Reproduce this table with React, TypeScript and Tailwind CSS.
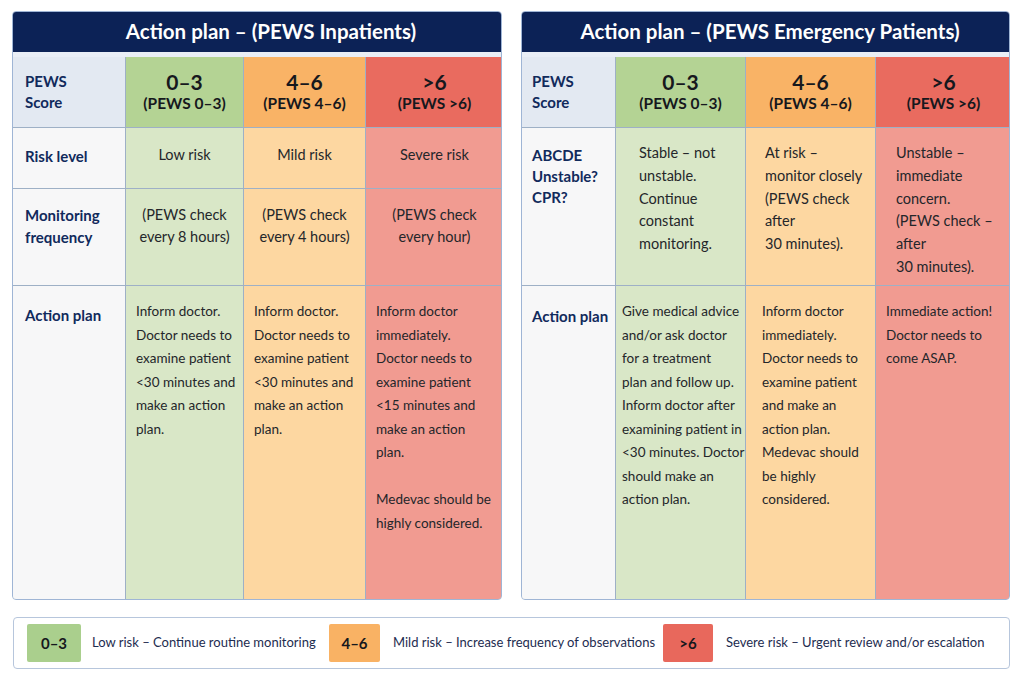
import React from 'react';

type Tone = 'g' | 'o' | 'r';

const headBg: Record<Tone, string> = {
  g: 'bg-[#b4d394]',
  o: 'bg-[#f9b366]',
  r: 'bg-[#e96b5f]',
};

const bodyBg: Record<Tone, string> = {
  g: 'bg-[#d9e7c7]',
  o: 'bg-[#fdd7a1]',
  r: 'bg-[#f19b91]',
};

const tones: Tone[] = ['g', 'o', 'r'];

const scores = [
  { big: '0–3', small: '(PEWS 0–3)' },
  { big: '4–6', small: '(PEWS 4–6)' },
  { big: '>6', small: '(PEWS >6)' },
];

function Lines({ lines }: { lines: string[] }) {
  return (
    <>
      {lines.map((l, i) => (
        <div key={i} className="whitespace-nowrap">
          {l === '' ? '\u00a0' : l}
        </div>
      ))}
    </>
  );
}

function Panel({
  title,
  titlePad,
  cols,
  rows,
  children,
}: {
  title: string;
  titlePad: string;
  cols: string;
  rows: string;
  children: React.ReactNode;
}) {
  return (
    <div className="flex flex-col rounded-[4px] border border-[#9fb5d5] overflow-hidden bg-white">
      <div className={`h-10 bg-[#0c2256] text-white text-[20.5px] font-bold flex items-center justify-center pb-px ${titlePad}`}>
        {title}
      </div>
      <div className="h-[5px] bg-[#e9eef6]" />
      <div className={`grid ${cols} ${rows} gap-px bg-[#9eb0c6]`}>{children}</div>
    </div>
  );
}

function ScoreHeads() {
  return (
    <>
      {scores.map((s, i) => (
        <div
          key={s.big}
          className={`${headBg[tones[i]]} flex flex-col items-center justify-center text-[#16181d] font-bold`}
        >
          <div className="text-[21px] leading-[23px]">{s.big}</div>
          <div className="text-[15.5px] leading-[21px]">{s.small}</div>
        </div>
      ))}
    </>
  );
}

function Label({ children, className = '' }: { children: React.ReactNode; className?: string }) {
  return (
    <div className={`bg-[#f7f7f8] text-[15px] font-bold text-[#112a5c] whitespace-nowrap ${className}`}>
      {children}
    </div>
  );
}

export default function App() {
  return (
    <div className="w-[1024px] h-[683px] bg-white font-[Lato,'Open_Sans',sans-serif] text-[#24262a] pt-[11px] px-3 overflow-hidden">
      <div className="flex gap-[19px]">
        <div className="w-[490px]">
          <Panel
            title="Action plan – (PEWS Inpatients)"
            titlePad="pl-[28px]"
            cols="grid-cols-[112px_117px_121px_137px]"
            rows="grid-rows-[70px_60px_96px_313px]"
          >
            <div className="bg-[#e3e9f2] px-3 flex flex-col justify-center text-[15px] font-bold text-[#112a5c] leading-[21px]">
              <div>PEWS</div>
              <div>Score</div>
            </div>
            <ScoreHeads />

            <Label className="px-3 flex items-center pb-1">Risk level</Label>
            {['Low risk', 'Mild risk', 'Severe risk'].map((t, i) => (
              <div key={t} className={`${bodyBg[tones[i]]} flex items-center justify-center pb-1.5 text-[14.5px]`}>
                {t}
              </div>
            ))}

            <Label className="px-3 pt-[15px] leading-[22px]">
              <div>Monitoring</div>
              <div>frequency</div>
            </Label>
            {[
              ['(PEWS check', 'every 8 hours)'],
              ['(PEWS check', 'every 4 hours)'],
              ['(PEWS check', 'every hour)'],
            ].map((l, i) => (
              <div key={i} className={`${bodyBg[tones[i]]} pt-[15px] text-center text-[14.5px] leading-[22px]`}>
                <Lines lines={l} />
              </div>
            ))}

            <Label className="px-3 pt-[18px] leading-[22px]">Action plan</Label>
            {[
              ['Inform doctor.', 'Doctor needs to', 'examine patient', '<30 minutes and', 'make an action', 'plan.'],
              ['Inform doctor.', 'Doctor needs to', 'examine patient', '<30 minutes and', 'make an action', 'plan.'],
              [
                'Inform doctor',
                'immediately.',
                'Doctor needs to',
                'examine patient',
                '<15 minutes and',
                'make an action',
                'plan.',
                '',
                'Medevac should be',
                'highly considered.',
              ],
            ].map((l, i) => (
              <div key={i} className={`${bodyBg[tones[i]]} pl-[10px] pt-[14px] text-[13.5px] leading-[23.5px]`}>
                <Lines lines={l} />
              </div>
            ))}
          </Panel>
        </div>

        <div className="w-[489px]">
          <Panel
            title="Action plan – (PEWS Emergency Patients)"
            titlePad="pl-[9px]"
            cols="grid-cols-[93px_129px_129px_135px]"
            rows="grid-rows-[70px_157px_313px]"
          >
            <div className="bg-[#e3e9f2] px-2.5 flex flex-col justify-center text-[15px] font-bold text-[#112a5c] leading-[21px]">
              <div>PEWS</div>
              <div>Score</div>
            </div>
            <ScoreHeads />

            <Label className="pl-2.5 pt-[17px] leading-[21px]">
              <div>ABCDE</div>
              <div>Unstable?</div>
              <div>CPR?</div>
            </Label>
            {[
              { pl: 'pl-[23px]', l: ['Stable – not', 'unstable.', 'Continue', 'constant', 'monitoring.'] },
              { pl: 'pl-[19px]', l: ['At risk –', 'monitor closely', '(PEWS check', 'after', '30 minutes).'] },
              { pl: 'pl-[20px]', l: ['Unstable –', 'immediate', 'concern.', '(PEWS check –', 'after', '30 minutes).'] },
            ].map((c, i) => (
              <div key={i} className={`${bodyBg[tones[i]]} ${c.pl} pt-[14px] text-[14.5px] leading-[22.8px]`}>
                <Lines lines={c.l} />
              </div>
            ))}

            <Label className="pl-2.5 pt-[19px] leading-[22px]">Action plan</Label>
            {[
              {
                pl: 'pl-[6px]',
                l: [
                  'Give medical advice',
                  'and/or ask doctor',
                  'for a treatment',
                  'plan and follow up.',
                  'Inform doctor after',
                  'examining patient in',
                  '<30 minutes. Doctor',
                  'should make an',
                  'action plan.',
                ],
              },
              {
                pl: 'pl-[16px]',
                l: [
                  'Inform doctor',
                  'immediately.',
                  'Doctor needs to',
                  'examine patient',
                  'and make an',
                  'action plan.',
                  'Medevac should',
                  'be highly',
                  'considered.',
                ],
              },
              { pl: 'pl-[10px]', l: ['Immediate action!', 'Doctor needs to', 'come ASAP.'] },
            ].map((c, i) => (
              <div key={i} className={`${bodyBg[tones[i]]} ${c.pl} pt-[14px] text-[13.5px] leading-[23.5px]`}>
                <Lines lines={c.l} />
              </div>
            ))}
          </Panel>
        </div>
      </div>

      <div className="mt-[17px] ml-px w-[997px] h-[52px] rounded-[4px] border border-[#b7c6dc] flex items-center px-[13px] text-[13px] text-[#1d2c4f]">
        <div className="w-[54px] h-[38px] bg-[#aacf8d] rounded-[2px] flex items-center justify-center text-[15px] font-bold text-[#16181d]">
          0–3
        </div>
        <div className="ml-[11px] w-[237px] whitespace-nowrap">Low risk – Continue routine monitoring</div>
        <div className="w-[51px] h-[38px] bg-[#f9b264] rounded-[2px] flex items-center justify-center text-[15px] font-bold text-[#16181d]">
          4–6
        </div>
        <div className="ml-[13px] w-[270px] whitespace-nowrap">Mild risk – Increase frequency of observations</div>
        <div className="w-[50px] h-[38px] bg-[#e8685c] rounded-[2px] flex items-center justify-center text-[15px] font-bold text-[#16181d]">
          &gt;6
        </div>
        <div className="ml-[13px] whitespace-nowrap">Severe risk – Urgent review and/or escalation</div>
      </div>
    </div>
  );
}
